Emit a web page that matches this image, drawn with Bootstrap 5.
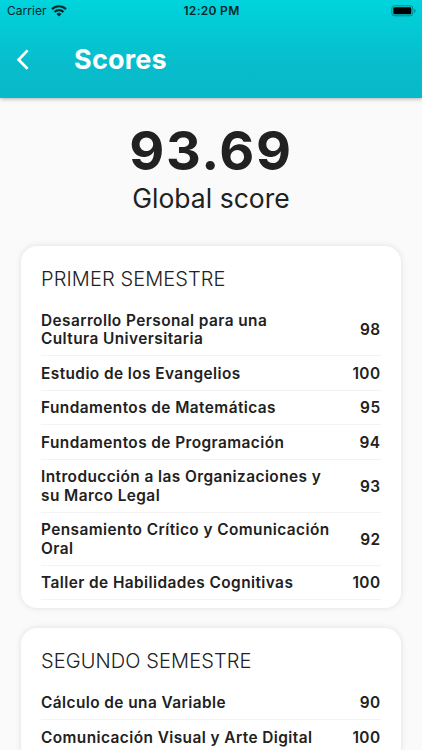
<!DOCTYPE html>
<html lang="es">
<head>
<meta charset="utf-8">
<meta name="viewport" content="width=device-width, initial-scale=1">
<title>Scores</title>
<link href="https://cdn.jsdelivr.net/npm/bootstrap@5.3.0/dist/css/bootstrap.min.css" rel="stylesheet">
<style>
body{font-family:Inter,"Liberation Sans",sans-serif;background:#fafafa;color:#212121;height:750px;overflow:hidden}
.app-head{height:98px;background:linear-gradient(#00d4dc,#08bccb 68%,#08bac9);box-shadow:0 1px 4px rgba(0,0,0,.3)}
.status{height:22px;font-size:12px;color:#04282b;padding:0 6px 0 7px}
.status-side{flex:1 1 0}
.battery{margin-right:-1px}
.carrier{letter-spacing:.05px}
.clock{font-weight:600;letter-spacing:.3px}
.title-bar{height:76px;padding:0 16px}
.title-bar h1{font-size:27px;font-weight:700;letter-spacing:.2px;margin-left:44px}
.total{font-size:54px;font-weight:700;line-height:60px;letter-spacing:1.6px;padding-top:23px}
.total-label{font-size:26.5px;line-height:34px;letter-spacing:.02px}
.semesters{padding-top:31px}
.semester{margin:0 21px 20.5px 20.5px;border-radius:16px;padding:20.5px 20.5px 7.6px;box-shadow:0 0 6px rgba(0,0,0,.11)}
.semester h2{font-size:20px;font-weight:300;line-height:24px;letter-spacing:.1px;margin-bottom:13px}
.subject{font-size:15.4px;font-weight:600;line-height:18.4px;padding:8.5px 0 6.6px;border-bottom:1px solid #f3f3f3;letter-spacing:.43px}
.subject-name{width:293px}
</style>
<script src="https://cdn.jsdelivr.net/npm/bootstrap@5.3.0/dist/js/bootstrap.bundle.min.js"></script>
</head>
<body>
<header class="app-head position-relative">
  <div class="status d-flex align-items-center">
    <div class="status-side d-flex align-items-center gap-1"><span class="carrier">Carrier</span>
      <svg width="16" height="12" viewBox="0 0 16 12" fill="none" stroke="#04282b" stroke-width="2.2"><path d="M1 4.1a10 10 0 0 1 14 0M3.5 7a6.4 6.4 0 0 1 9 0"/><path d="M8 11.4 5.5 8.9a3.6 3.6 0 0 1 5 0z" fill="#04282b" stroke="none"/></svg>
    </div>
    <span class="clock">12:20 PM</span>
    <div class="status-side d-flex justify-content-end">
      <svg class="battery" width="26" height="12" viewBox="0 0 26 12"><rect x=".8" y=".8" width="21" height="10" rx="2.6" fill="none" stroke="#048389"/><rect x="2.3" y="2.3" width="18" height="7" rx="1.3" fill="#000"/><path d="M23.3 4v3.8q1.3-.5 1.3-1.9T23.3 4" fill="#048389"/></svg>
    </div>
  </div>
  <div class="title-bar d-flex align-items-center text-white">
    <svg width="14" height="22" viewBox="0 0 14 22" fill="none" stroke="#fff" stroke-width="2.7"><path d="M11.6 1.4 2.6 10.7l9 9.1"/></svg>
    <h1 class="mb-0">Scores</h1>
  </div>
</header>
<main>
  <section class="text-center">
    <div class="total">93.69</div>
    <div class="total-label">Global score</div>
  </section>
  <div class="semesters">
  <section class="semester bg-white">
    <h2>PRIMER SEMESTRE</h2>
    <div class="subject d-flex justify-content-between align-items-center"><span class="subject-name">Desarrollo Personal para una<br>Cultura Universitaria</span><span>98</span></div>
    <div class="subject d-flex justify-content-between align-items-center"><span class="subject-name">Estudio de los Evangelios</span><span>100</span></div>
    <div class="subject d-flex justify-content-between align-items-center"><span class="subject-name">Fundamentos de Matemáticas</span><span>95</span></div>
    <div class="subject d-flex justify-content-between align-items-center"><span class="subject-name">Fundamentos de Programación</span><span>94</span></div>
    <div class="subject d-flex justify-content-between align-items-center"><span class="subject-name">Introducción a las Organizaciones y<br>su Marco Legal</span><span>93</span></div>
    <div class="subject d-flex justify-content-between align-items-center"><span class="subject-name">Pensamiento Crítico y Comunicación<br>Oral</span><span>92</span></div>
    <div class="subject d-flex justify-content-between align-items-center"><span class="subject-name">Taller de Habilidades Cognitivas</span><span>100</span></div>
  </section>
  <section class="semester bg-white">
    <h2>SEGUNDO SEMESTRE</h2>
    <div class="subject d-flex justify-content-between align-items-center"><span class="subject-name">Cálculo de una Variable</span><span>90</span></div>
    <div class="subject d-flex justify-content-between align-items-center"><span class="subject-name">Comunicación Visual y Arte Digital</span><span>100</span></div>
  </section>
  </div>
</main>
</body>
</html>
